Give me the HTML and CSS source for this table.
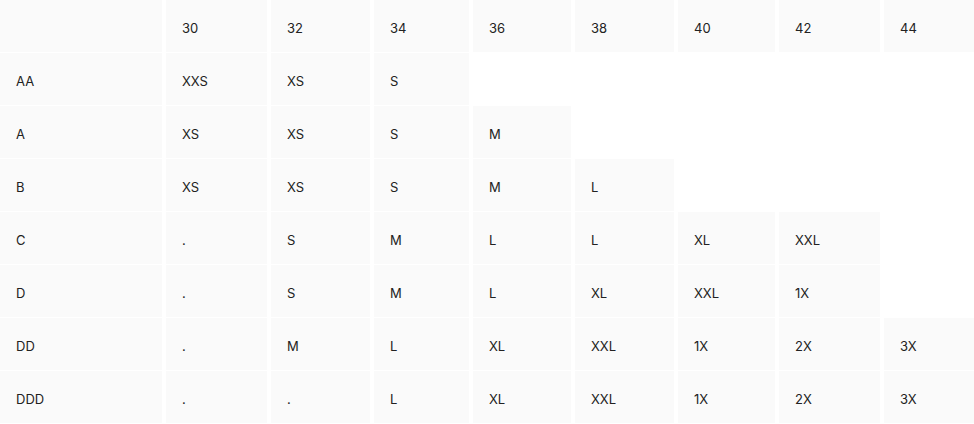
FILE: index.html
```html
<!DOCTYPE html>
<html lang="en">
<head>
<meta charset="utf-8">
<title>Size chart</title>
<link rel="stylesheet" href="styles.css">
</head>
<body>
<div class="chart">
  <div class="cell head"></div>
  <div class="cell head">30</div>
  <div class="cell head">32</div>
  <div class="cell head">34</div>
  <div class="cell head">36</div>
  <div class="cell head">38</div>
  <div class="cell head">40</div>
  <div class="cell head">42</div>
  <div class="cell head">44</div>

  <div class="cell">AA</div>
  <div class="cell">XXS</div>
  <div class="cell">XS</div>
  <div class="cell">S</div>
  <div class="cell empty"></div>
  <div class="cell empty"></div>
  <div class="cell empty"></div>
  <div class="cell empty"></div>
  <div class="cell empty"></div>

  <div class="cell">A</div>
  <div class="cell">XS</div>
  <div class="cell">XS</div>
  <div class="cell">S</div>
  <div class="cell">M</div>
  <div class="cell empty"></div>
  <div class="cell empty"></div>
  <div class="cell empty"></div>
  <div class="cell empty"></div>

  <div class="cell">B</div>
  <div class="cell">XS</div>
  <div class="cell">XS</div>
  <div class="cell">S</div>
  <div class="cell">M</div>
  <div class="cell">L</div>
  <div class="cell empty"></div>
  <div class="cell empty"></div>
  <div class="cell empty"></div>

  <div class="cell">C</div>
  <div class="cell">.</div>
  <div class="cell">S</div>
  <div class="cell">M</div>
  <div class="cell">L</div>
  <div class="cell">L</div>
  <div class="cell">XL</div>
  <div class="cell">XXL</div>
  <div class="cell empty"></div>

  <div class="cell">D</div>
  <div class="cell">.</div>
  <div class="cell">S</div>
  <div class="cell">M</div>
  <div class="cell">L</div>
  <div class="cell">XL</div>
  <div class="cell">XXL</div>
  <div class="cell">1X</div>
  <div class="cell empty"></div>

  <div class="cell">DD</div>
  <div class="cell">.</div>
  <div class="cell">M</div>
  <div class="cell">L</div>
  <div class="cell">XL</div>
  <div class="cell">XXL</div>
  <div class="cell">1X</div>
  <div class="cell">2X</div>
  <div class="cell">3X</div>

  <div class="cell">DDD</div>
  <div class="cell">.</div>
  <div class="cell">.</div>
  <div class="cell">L</div>
  <div class="cell">XL</div>
  <div class="cell">XXL</div>
  <div class="cell">1X</div>
  <div class="cell">2X</div>
  <div class="cell">3X</div>
</div>
</body>
</html>
```
FILE: styles.css
```css
html, body {
  margin: 0;
  padding: 0;
  background: #ffffff;
  overflow: hidden;
}

body {
  font-family: "Inter", "Liberation Sans", Arial, sans-serif;
  font-size: 13px;
  color: #222222;
}

.chart {
  display: grid;
  grid-template-columns: 162px 101px 99px 95px 98px 99px 97px 101px 90px;
  grid-auto-rows: 52px;
  column-gap: 4px;
  row-gap: 1px;
}

.cell {
  background: #fafafa;
  padding: 20px 16px 0 16px;
  line-height: 17px;
  box-sizing: border-box;
}

.cell.empty {
  background: transparent;
}
```
